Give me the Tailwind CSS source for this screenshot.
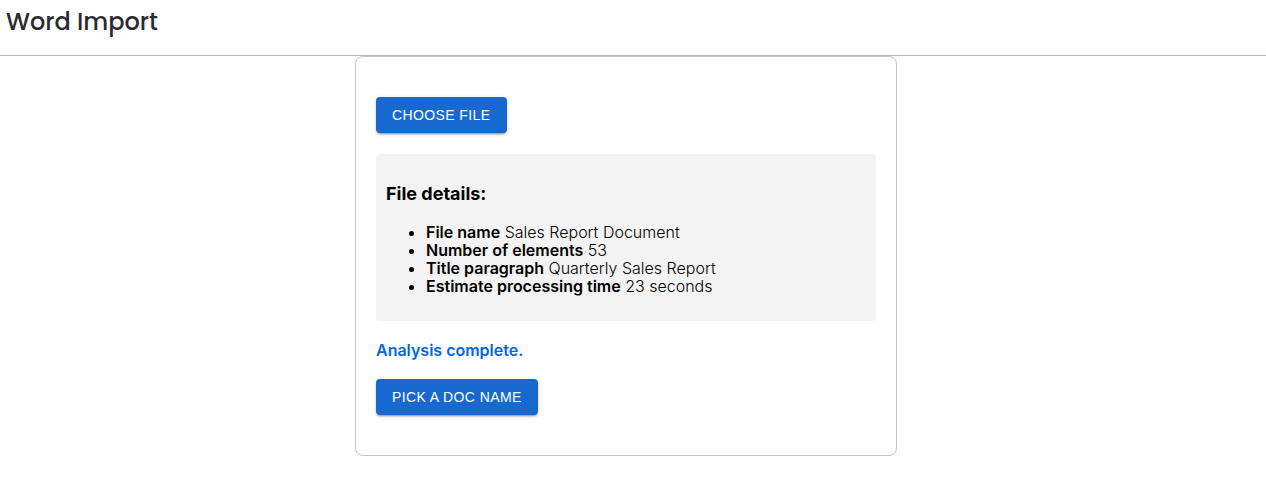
<!DOCTYPE html>
<html lang="en">
<head>
<meta charset="utf-8">
<meta name="viewport" content="width=device-width, initial-scale=1">
<title>Word Import</title>
<script src="https://cdn.jsdelivr.net/npm/@tailwindcss/browser@4"></script>
</head>
<body class="bg-white font-['Inter',sans-serif] text-black">
<header class="border-b border-[#b9b9c3] px-1.5 pt-1 pb-4">
<h1 class="font-['Poppins','Inter',sans-serif] text-2xl leading-[35px] font-medium text-[#2b2b2f]">Word Import</h1>
</header>
<main class="pr-3.5">
<section class="mx-auto w-full max-w-[542px] rounded-lg border border-[#c4c4c8] px-5 py-10">
<button type="button" class="block rounded bg-[#1769cf] px-4 py-1.5 font-['Liberation_Sans',sans-serif] text-sm leading-6 tracking-[0.4px] text-white uppercase shadow-[0_3px_1px_-2px_rgba(0,0,0,0.2),0_2px_2px_0_rgba(0,0,0,0.14),0_1px_5px_0_rgba(0,0,0,0.12)]">Choose file</button>
<div class="mt-[21px] rounded bg-[#f3f3f3] px-2.5 pt-7 pb-[26px]">
<h2 class="text-lg leading-6 font-bold">File details:</h2>
<ul class="mt-[17px] list-disc pl-10 text-base leading-[18px] font-light">
<li><b class="font-semibold">File name</b> Sales Report Document</li>
<li><b class="font-semibold">Number of elements</b> 53</li>
<li><b class="font-semibold">Title paragraph</b> Quarterly Sales Report</li>
<li><b class="font-semibold">Estimate processing time</b> 23 seconds</li>
</ul>
</div>
<p class="mt-5 text-base leading-[18px] font-semibold text-[#0068e6]">Analysis complete.</p>
<button type="button" class="mt-5 block rounded bg-[#1769cf] px-4 py-1.5 font-['Liberation_Sans',sans-serif] text-sm leading-6 tracking-[0.4px] text-white uppercase shadow-[0_3px_1px_-2px_rgba(0,0,0,0.2),0_2px_2px_0_rgba(0,0,0,0.14),0_1px_5px_0_rgba(0,0,0,0.12)]">Pick a doc name</button>
</section>
</main>
</body>
</html>
